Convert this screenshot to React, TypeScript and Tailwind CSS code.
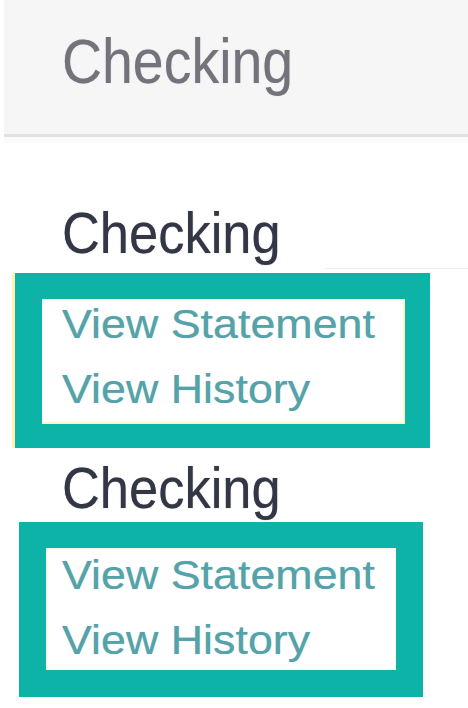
import React from "react";

function Links({ pl }: { pl: string }) {
  return (
    <div className={`flex flex-col gap-[25px] pt-[5px] ${pl}`}>
      <div className="h-[40px]">
        <span className="inline-block origin-left scale-x-[1.12] text-[#55a2a8] text-[40px] leading-[40px] whitespace-nowrap [text-shadow:0_0_1px_rgba(85,162,168,0.6)]">
          View Statement
        </span>
      </div>
      <div className="h-[40px]">
        <span className="inline-block origin-left scale-x-[1.12] text-[#55a2a8] text-[40px] leading-[40px] whitespace-nowrap [text-shadow:0_0_1px_rgba(85,162,168,0.6)]">
          View History
        </span>
      </div>
    </div>
  );
}

export default function App() {
  return (
    <div
      className="w-[468px] h-[708px] bg-white overflow-hidden"
      style={{ fontFamily: "'Liberation Sans', Arial, sans-serif" }}
    >
      <div className="ml-[4px] h-[134px] bg-[#f6f6f6] pt-[30px] pl-[58px]">
        <span className="inline-block origin-left scale-x-[0.88] text-[#74737c] text-[63px] leading-none whitespace-nowrap [text-shadow:0_0_1px_rgba(116,115,124,0.5)]">
          Checking
        </span>
      </div>
      <div className="ml-[4px] h-[3px] bg-[#e1e1e1]" />
      <div className="ml-[4px] h-[6px] bg-[#fafafa]" />

      <div className="h-[130px] flex flex-col pt-[62px] pl-[62px]">
        <span className="inline-block origin-left scale-x-[0.92] text-[#333645] text-[57px] leading-none whitespace-nowrap [text-shadow:0_0_1px_rgba(51,54,69,0.6)]">
          Checking
        </span>
        <div className="mt-auto mb-[4px] ml-[263px] h-[1px] bg-[#f0f0f0]" />
      </div>

      <div className="ml-[12px] w-[418px] h-[175px] border-l-[3px] border-[#fff4b0]">
        <div className="h-full bg-[#0cb3a6] pt-[26px] pl-[27px] pr-[25px] pb-[24px]">
          <div className="h-full bg-white border-r-2 border-b-2 border-[#fff5c2]">
            <Links pl="pl-[20px]" />
          </div>
        </div>
      </div>

      <div className="h-[74px] pt-[12px] pl-[62px]">
        <span className="inline-block origin-left scale-x-[0.92] text-[#333645] text-[57px] leading-none whitespace-nowrap [text-shadow:0_0_1px_rgba(51,54,69,0.6)]">
          Checking
        </span>
      </div>

      <div className="ml-[19px] w-[404px] h-[175px] bg-[#0cb3a6] pt-[26px] pl-[27px] pr-[27px] pb-[27px]">
        <div className="h-full bg-white border-l-2 border-t-2 border-[#fffbe0]">
          <Links pl="pl-[14px]" />
        </div>
      </div>
    </div>
  );
}
